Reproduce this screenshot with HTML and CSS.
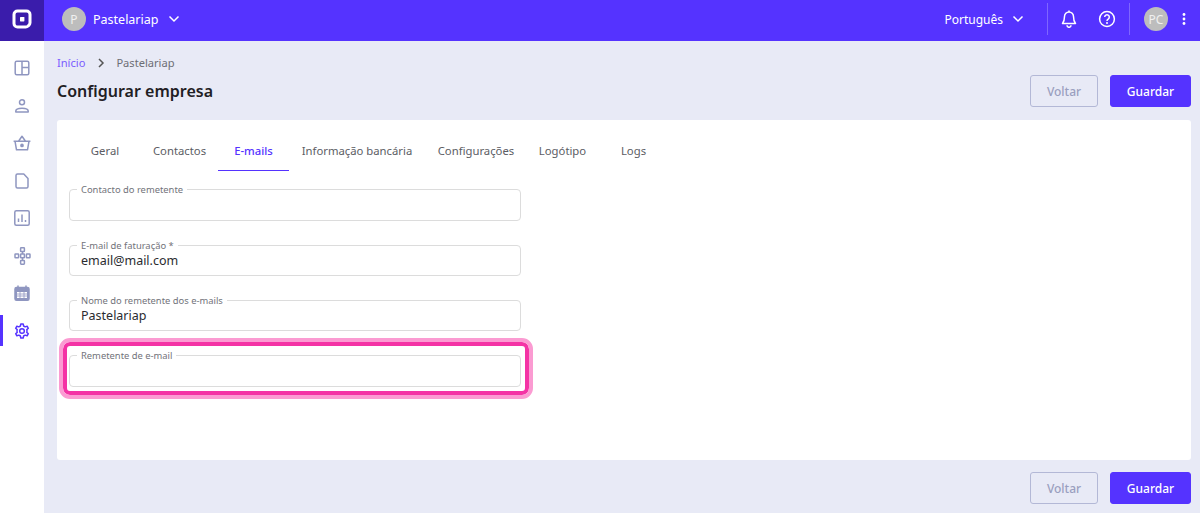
FILE: index.html
```html
<!DOCTYPE html>
<html lang="pt">
<head>
<meta charset="utf-8">
<title>Configurar empresa</title>
<link rel="stylesheet" href="styles.css">
</head>
<body>
<header class="topbar">
  <div class="logo-cell">
    <svg width="20" height="20" viewBox="0 0 20 20"><path d="M5.500 2h9A3.500 3.500 0 0 1 18 5.500v8.200a3.500 3.500 0 0 1-1 2.400l-.9.900a3.500 3.500 0 0 1-2.400 1H5.500A3.500 3.500 0 0 1 2 14.500v-9A3.500 3.500 0 0 1 5.500 2z" fill="none" stroke="#fff" stroke-width="3"/><rect x="8" y="8" width="4.400" height="4.400" rx=".6" fill="#fff"/></svg>
  </div>
  <div class="company">
    <span class="avatar avatar-p">P</span>
    <span class="company-name">Pastelariap</span>
    <svg class="chev" width="12" height="8" viewBox="0 0 12 8"><path d="M1.500 1.500 6 6l4.500-4.500" fill="none" stroke="#fff" stroke-width="1.500"/></svg>
  </div>
  <div class="top-right">
    <span class="lang">Português</span>
    <svg class="chev lang-chev" width="12" height="8" viewBox="0 0 12 8"><path d="M1.500 1.500 6 6l4.500-4.500" fill="none" stroke="#fff" stroke-width="1.500"/></svg>
    <span class="sep sep-a"></span>
    <svg class="bell" width="16" height="18" viewBox="0 0 16 18"><path d="M8 2a4.500 4.500 0 0 0-4.500 4.500c0 4-.8 5.500-2 7h13c-1.200-1.500-2-3-2-7A4.500 4.500 0 0 0 8 2z" fill="none" stroke="#fff" stroke-width="1.500" stroke-linejoin="round"/><path d="M8 .6v1.500M6 15.300a2 2 0 0 0 4 0" fill="none" stroke="#fff" stroke-width="1.500"/></svg>
    <svg class="help" width="18" height="18" viewBox="0 0 18 18"><circle cx="9" cy="9" r="7.400" fill="none" stroke="#fff" stroke-width="1.500"/><path d="M6.700 7.100a2.300 2.300 0 1 1 3.500 2c-.8.500-1.200 1-1.200 1.800" fill="none" stroke="#fff" stroke-width="1.500"/><circle cx="9" cy="13" r="1" fill="#fff"/></svg>
    <span class="sep sep-b"></span>
    <span class="avatar avatar-pc">PC</span>
    <svg class="dots" width="4" height="12" viewBox="0 0 4 12"><circle cx="2" cy="1.500" r="1.400" fill="#fff"/><circle cx="2" cy="6" r="1.400" fill="#fff"/><circle cx="2" cy="10.500" r="1.400" fill="#fff"/></svg>
  </div>
</header>
<div class="shell">
  <nav class="sidebar">
    <a class="nav-item"><svg width="16" height="16" viewBox="0 0 16 16"><rect x="1.200" y="1.200" width="13.600" height="13.600" rx="1.500"/><path d="M8 1.200v13.600M8 7.500h6.800"/></svg></a>
    <a class="nav-item"><svg width="16" height="16" viewBox="0 0 16 16"><circle cx="8" cy="4.200" r="2.500"/><path d="M1.800 14v-.9c0-1.700 2.800-2.800 6.200-2.800s6.200 1.100 6.200 2.800v.9z"/></svg></a>
    <a class="nav-item"><svg width="18" height="16" viewBox="0 0 18 16"><path d="M.6 6.200h16.800M2 6.200l1.500 8.600h11l1.500-8.600M5.500 6.200 9 1.300l3.500 4.900"/><circle cx="9" cy="10.400" r="1.100" class="fill"/></svg></a>
    <a class="nav-item"><svg width="14" height="16" viewBox="0 0 14 16"><path d="M2.500 1h6.300l4.200 4.500v8a1.500 1.500 0 0 1-1.500 1.500h-9A1.500 1.500 0 0 1 1 13.500v-11A1.500 1.500 0 0 1 2.500 1z"/></svg></a>
    <a class="nav-item"><svg width="16" height="16" viewBox="0 0 16 16"><rect x=".8" y=".8" width="14.400" height="14.400" rx="1.500"/><path d="M4.500 12V8.500M8 12V4.500M11.500 12V10"/></svg></a>
    <a class="nav-item"><svg width="17" height="18" viewBox="0 0 17 18"><rect x="6.600" y=".8" width="3.800" height="3.800" rx=".6"/><rect x="1" y="7" width="3.600" height="3.800" rx=".6"/><rect x="6.600" y="7" width="3.800" height="3.800" rx=".6"/><rect x="12.400" y="7" width="3.600" height="3.800" rx=".6"/><rect x="6.600" y="13.400" width="3.800" height="3.800" rx=".6"/><path d="M8.500 4.600V7M8.500 10.800v2.600"/></svg></a>
    <a class="nav-item"><svg width="16" height="16" viewBox="0 0 16 16"><rect x="1" y="2.500" width="14" height="12.700" rx="1.500" class="fill"/><path d="M4 .6v3M12 .6v3"/><rect x="3" y="7" width="10" height="6" fill="#fff" stroke="none"/><path d="M3 9h10M3 11h10M6 7v6M10 7v6" stroke="#8f96c0" stroke-width=".8"/></svg></a>
    <a class="nav-item active"><svg width="16" height="16" viewBox="0 0 24 24"><circle cx="12" cy="12" r="3.500"/><path d="M10.200 1.500h3.600l.6 3 2.400 1.300 2.900-1 1.800 3.100-2.300 2a7 7 0 0 1 0 4.200l2.300 2-1.800 3.100-2.900-1-2.400 1.300-.6 3h-3.600l-.6-3-2.400-1.300-2.900 1-1.800-3.100 2.300-2a7 7 0 0 1 0-4.200l-2.300-2 1.800-3.100 2.900 1 2.400-1.300z"/></svg></a>
  </nav>
  <main class="content">
    <div class="crumbs">
      <a class="crumb-link">Início</a>
      <svg width="8" height="10" viewBox="0 0 8 10"><path d="M2 1l4 4-4 4" fill="none" stroke="#555" stroke-width="1.500"/></svg>
      <span class="crumb-here">Pastelariap</span>
    </div>
    <div class="title-row">
      <h1>Configurar empresa</h1>
      <div class="actions">
        <button class="btn btn-ghost">Voltar</button>
        <button class="btn btn-primary">Guardar</button>
      </div>
    </div>
    <section class="card">
      <div class="tabs">
        <a class="tab tab-geral">Geral</a>
        <a class="tab tab-contactos">Contactos</a>
        <a class="tab tab-emails active">E-mails</a>
        <a class="tab tab-banco">Informação bancária</a>
        <a class="tab tab-config">Configurações</a>
        <a class="tab tab-logo">Logótipo</a>
        <a class="tab tab-logs">Logs</a>
      </div>
      <form class="fields">
        <fieldset class="field field-tall"><legend>Contacto do remetente</legend><div class="value"></div></fieldset>
        <fieldset class="field"><legend>E-mail de faturação *</legend><div class="value">email@mail.com</div></fieldset>
        <fieldset class="field"><legend>Nome do remetente dos e-mails</legend><div class="value">Pastelariap</div></fieldset>
        <div class="highlight-wrap">
          <fieldset class="field field-tall field-last"><legend>Remetente de e-mail</legend><div class="value"></div></fieldset>
          <span class="highlight"></span>
        </div>
      </form>
    </section>
    <div class="actions actions-bottom">
      <button class="btn btn-ghost">Voltar</button>
      <button class="btn btn-primary">Guardar</button>
    </div>
  </main>
</div>
</body>
</html>
```
FILE: styles.css
```css
* { box-sizing: border-box; }
html, body { margin: 0; height: 513px; overflow: hidden; }
body { font-family: "Noto Sans", sans-serif; background: #e8eaf6; color: #212226; }

.topbar { height: 41px; background: #5533ff; display: flex; align-items: flex-start; color: #fff; }
.logo-cell { width: 44px; height: 41px; padding-bottom: 3px; background: #3a1cab; display: flex; align-items: center; justify-content: center; flex: none; }
.company { display: flex; align-items: center; margin-left: 18px; height: 38px; }
.avatar { border-radius: 50%; background: #bdbdbd; color: #f0f0f0; display: flex; align-items: center; justify-content: center; }
.avatar-p { width: 24px; height: 24px; font-size: 12px; }
.company-name { font-size: 12.500px; margin-left: 7px; }
.company .chev { margin-left: 10px; }
.top-right { margin-left: auto; display: flex; align-items: center; height: 38px; }
.lang { font-size: 12px; }
.lang-chev { margin-left: 9px; }
.sep { width: 1px; height: 32px; background: rgba(255,255,255,.25); }
.sep-a { margin-left: 23px; }
.bell { margin-left: 13px; }
.help { margin-left: 21px; }
.sep-b { margin-left: 13px; }
.avatar-pc { width: 24px; height: 24px; font-size: 12px; margin-left: 14px; }
.dots { margin-left: 14px; margin-right: 14px; }

.shell { display: flex; height: 472px; }
.sidebar { width: 44px; background: #fff; flex: none; padding-top: 8.250px; display: flex; flex-direction: column; }
.nav-item { height: 37.500px; display: flex; align-items: center; justify-content: center; position: relative; }
.nav-item svg { fill: none; stroke: #8f96c0; stroke-width: 1.500; stroke-linejoin: round; }
.nav-item svg .fill { fill: #8f96c0; }
.nav-item.active::before { content: ""; position: absolute; left: 0; top: 3px; bottom: 3px; width: 3px; background: #5533ff; }
.nav-item.active svg { stroke: #5533ff; stroke-width: 2.200; }

.content { flex: 1; padding: 0 9px 0 13px; min-width: 0; }
.crumbs { display: flex; align-items: center; font-size: 11.100px; height: 17px; margin-top: 13px; }
.crumb-link { color: #7a5cff; }
.crumbs svg { margin-left: 12px; }
.crumb-here { color: #6d6e75; margin-left: 11px; }
.title-row { display: flex; align-items: center; justify-content: space-between; margin-top: 4px; height: 32px; }
h1 { margin: 0; font-size: 16px; font-weight: 600; color: #1f2024; }
.actions { display: flex; gap: 12px; }
.btn { width: 68px; height: 32px; border-radius: 3px; font: 500 12px "Noto Sans", sans-serif; padding: 0; }
.btn-ghost { width: 68px; background: transparent; border: 1px solid #b3b8d6; color: #9a9fbf; }
.btn-primary { width: 81px; background: #5533ff; border: 1px solid #5533ff; color: #fff; }
.actions-bottom { justify-content: flex-end; margin-top: 12px; }

.card { background: #fff; border-radius: 3px; height: 340px; margin-top: 13px; padding: 12px 12px 0; }
.tabs { display: flex; height: 39px; font-size: 11.300px; }
.tab { color: #5c5d64; display: flex; align-items: center; justify-content: center; height: 39px; padding-bottom: 2px; }
.tab-geral { width: 72px; }
.tab-contactos { width: 77px; }
.tab-emails { width: 71px; }
.tab-banco { width: 136px; }
.tab-config { width: 90px; margin-left: 6px; }
.tab-logo { width: 58px; margin-left: 12.500px; }
.tab-logs { width: 64px; margin-left: 10px; }
.tab.active { color: #5533ff; font-weight: 500; border-bottom: 1px solid #5533ff; }

.fields { width: 452px; margin-top: 12px; display: flex; flex-direction: column; }
.field { margin: 0 0 18px; padding: 0 11px; border: 1px solid #dcdcdc; border-radius: 4px; height: 37px; min-width: 0; }
.field-tall { height: 38px; }
.field-last { margin-bottom: 0; }
.field legend { font-size: 9.400px; line-height: 13px; color: #72737a; padding: 0 4px; margin-left: -4px; height: 13px; }
.value { font-size: 12.500px; line-height: 18px; color: #2a2b30; height: 18px; }
.highlight-wrap { position: relative; }
.highlight { position: absolute; left: -6px; right: -8px; top: -7px; bottom: -8px; border: 4px solid #f433a5; border-radius: 7px; outline: 4px solid #fb9bd2; outline-offset: 0; pointer-events: none; }
```
